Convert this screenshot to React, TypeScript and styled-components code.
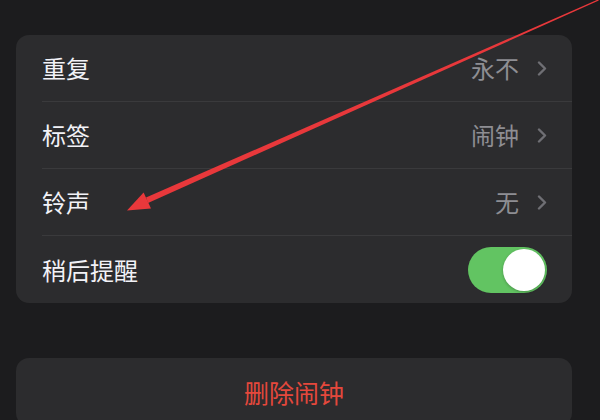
import React from "react";
import styled, { createGlobalStyle } from "styled-components";

const Global = createGlobalStyle`
  html, body { margin: 0; padding: 0; background: #1c1c1e; overflow: hidden; }
  body { width: 600px; height: 420px; font-family: "Noto Sans CJK SC", "Noto Sans", sans-serif; }
`;

const Screen = styled.div`
  position: relative;
  width: 600px;
  height: 420px;
  box-sizing: border-box;
  padding: 35px 28px 0 16px;
  background: #1c1c1e;
  display: flex;
  flex-direction: column;
  gap: 55px;
  overflow: hidden;
`;

const Card = styled.div`
  flex-shrink: 0;
  background: #2c2c2e;
  border-radius: 13px;
  display: flex;
  flex-direction: column;
  overflow: hidden;
`;

const Row = styled.div<{ $last?: boolean }>`
  flex-shrink: 0;
  height: 67px;
  margin-left: 26px;
  padding-right: 25px;
  display: flex;
  align-items: center;
  justify-content: space-between;
  border-bottom: ${(p) => (p.$last ? "none" : "1px solid #3a3a3c")};
  box-sizing: border-box;
`;

const Label = styled.span`
  color: #f2f2f7;
  font-size: 24px;
  line-height: 1;
`;

const Detail = styled.span`
  display: flex;
  align-items: center;
  gap: 18px;
  color: #8e8e93;
  font-size: 24px;
  line-height: 1;
`;

const Chevron = () => (
  <svg width="10" height="15" viewBox="0 0 10 15">
    <path d="M2 1.5 L8 7.5 L2 13.5" fill="none" stroke="#6f6f74" strokeWidth="2.4" strokeLinecap="round" strokeLinejoin="round" />
  </svg>
);

const Toggle = styled.div`
  width: 79px;
  height: 46px;
  border-radius: 23px;
  background: #62c462;
  display: flex;
  align-items: center;
  justify-content: flex-end;
  padding: 2px;
  box-sizing: border-box;
`;

const Knob = styled.div`
  width: 42px;
  height: 42px;
  border-radius: 50%;
  background: #ffffff;
  box-shadow: 0 1px 3px rgba(0, 0, 0, 0.25);
`;

const DeleteButton = styled.div`
  background: #2c2c2e;
  border-radius: 13px;
  height: 68px;
  flex-shrink: 0;
  display: flex;
  align-items: center;
  justify-content: center;
  color: #e5483c;
  font-size: 25px;
`;

const Overlay = styled.svg`
  position: absolute;
  left: 0;
  top: 0;
  pointer-events: none;
`;

const Arrow = () => (
  <Overlay width="600" height="420" viewBox="0 0 600 420">
    <polygon points="148,203 146,197.5 598.2,-0.6 598.8,0.6" fill="#e8383b" />
    <polygon points="127,210.5 151,208.6 143.6,192.6" fill="#e8383b" />
  </Overlay>
);

const items = [
  { label: "重复", value: "永不" },
  { label: "标签", value: "闹钟" },
  { label: "铃声", value: "无" },
];

export default function App() {
  return (
    <>
      <Global />
      <Screen>
        <Card>
          {items.map((it) => (
            <Row key={it.label}>
              <Label>{it.label}</Label>
              <Detail>
                {it.value}
                <Chevron />
              </Detail>
            </Row>
          ))}
          <Row $last>
            <Label>稍后提醒</Label>
            <Toggle>
              <Knob />
            </Toggle>
          </Row>
        </Card>
        <DeleteButton>删除闹钟</DeleteButton>
        <Arrow />
      </Screen>
    </>
  );
}
